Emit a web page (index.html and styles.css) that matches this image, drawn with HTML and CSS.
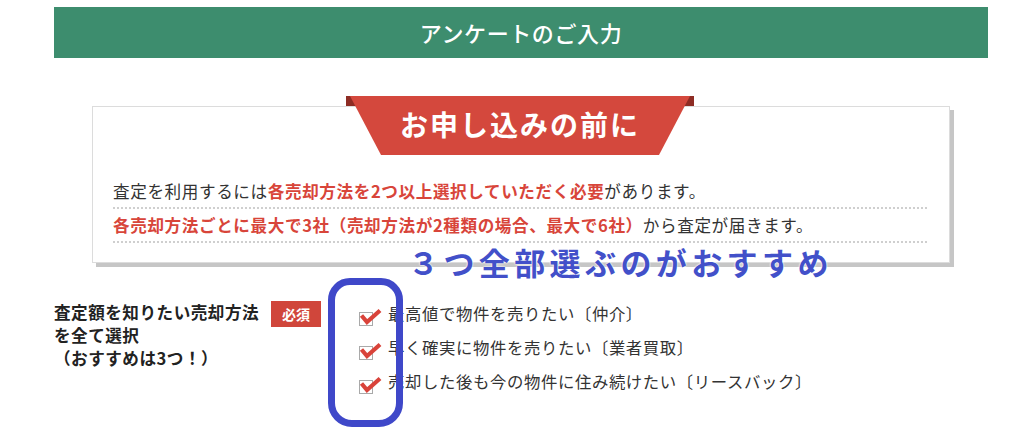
FILE: index.html
```html
<!DOCTYPE html>
<html lang="ja">
<head>
<meta charset="utf-8">
<title>アンケートのご入力</title>
<link rel="stylesheet" href="styles.css">
</head>
<body>
<div class="page">
  <h1 class="head">アンケートのご入力</h1>

  <section class="notice">
    <div class="ribbon">
      <svg class="ribbon-bg" width="348" height="60" viewBox="0 0 348 60" aria-hidden="true">
        <polygon points="0,0 6,0 11,10 0,10" fill="#8e2c24"/>
        <polygon points="342,0 348,0 348,10 337,10" fill="#8e2c24"/>
        <polygon points="4,0 344,0 313,59 35,59" fill="#d4483d"/>
      </svg>
      <span class="ribbon-text">お申し込みの前に</span>
    </div>
    <p class="notice-row">査定を利用するには<strong>各売却方法を2つ以上選択していただく必要</strong>があります。</p>
    <p class="notice-row"><strong>各売却方法ごとに最大で3社（売却方法が2種類の場合、最大で6社）</strong>から査定が届きます。</p>
  </section>

  <section class="form-row">
    <div class="label">査定額を知りたい売却方法<br>を全て選択<br>（おすすめは3つ！）</div>
    <span class="badge">必須</span>
    <ul class="options">
      <li class="opt"><span class="cb"><svg class="tick" width="24" height="18" viewBox="0 0 24 18" aria-hidden="true"><path d="M2.5 7.5 L8 14 L21 2.5" fill="none" stroke="#d9433a" stroke-width="4.2" stroke-linejoin="miter"/></svg></span><span class="opt-text">最高値で物件を売りたい〔仲介〕</span></li>
      <li class="opt"><span class="cb"><svg class="tick" width="24" height="18" viewBox="0 0 24 18" aria-hidden="true"><path d="M2.5 7.5 L8 14 L21 2.5" fill="none" stroke="#d9433a" stroke-width="4.2" stroke-linejoin="miter"/></svg></span><span class="opt-text">早く確実に物件を売りたい〔業者買取〕</span></li>
      <li class="opt"><span class="cb"><svg class="tick" width="24" height="18" viewBox="0 0 24 18" aria-hidden="true"><path d="M2.5 7.5 L8 14 L21 2.5" fill="none" stroke="#d9433a" stroke-width="4.2" stroke-linejoin="miter"/></svg></span><span class="opt-text">売却した後も今の物件に住み続けたい〔リースバック〕</span></li>
    </ul>
  </section>

  <div class="memo">３つ全部選ぶのがおすすめ</div>
  <div class="memo-ring"></div>
</div>
</body>
</html>
```

FILE: styles.css
```css
html, body {
  margin: 0;
  padding: 0;
  background: #fff;
}

body {
  font-family: "Noto Sans CJK JP", "Noto Sans", sans-serif;
  color: #333;
}

.page {
  position: relative;
  width: 934px;
  padding: 7px 36px 0 54px;
}

.head {
  margin: 0;
  height: 51px;
  line-height: 50px;
  background: #3d8d6e;
  color: #fff;
  text-align: center;
  font-size: 22px;
  font-weight: 500;
  letter-spacing: 0.6px;
}

.notice {
  margin: 48px 38px 0 38px;
  border: 1px solid #dcdcdc;
  box-shadow: 4px 4px 0 #c6c6c6;
  padding: 0 22px 19px 20px;
  background: #fff;
}

.ribbon {
  position: relative;
  width: 348px;
  height: 59px;
  margin: -11px auto 20px;
  display: flex;
  justify-content: center;
  align-items: center;
}

.ribbon-bg {
  position: absolute;
  left: 0;
  top: 0;
}

.ribbon-text {
  position: relative;
  color: #fff;
  font-size: 28px;
  font-weight: 700;
  letter-spacing: 2px;
  line-height: 1;
  margin-top: -4px;
}

.notice-row {
  margin: 0;
  line-height: 32px;
  font-size: 16.6px;
  letter-spacing: 0.6px;
  border-bottom: 2px dotted #cfcfcf;
  white-space: nowrap;
}

.notice-row strong {
  color: #d8453a;
  font-weight: 700;
}

.form-row {
  display: flex;
  align-items: flex-start;
  margin-top: 33px;
  padding-bottom: 59px;
  border-bottom: 1px solid #dedede;
}

.label {
  width: 205px;
  padding-top: 5px;
  font-size: 16.6px;
  font-weight: 700;
  line-height: 23px;
  letter-spacing: 0.5px;
  color: #222;
  white-space: nowrap;
}

.badge {
  margin: 5px 0 0 12px;
  width: 50px;
  height: 26px;
  line-height: 26px;
  background: #d0463b;
  color: #fff;
  font-size: 14px;
  font-weight: 700;
  text-align: center;
}

.options {
  list-style: none;
  margin: 0 0 0 38px;
  padding: 0;
}

.opt {
  display: flex;
  align-items: flex-start;
  height: 34px;
}

.cb {
  position: relative;
  flex: none;
  width: 12px;
  height: 12px;
  margin-top: 16px;
  border: 1px solid #a9a9a9;
  background: #fff;
}

.tick {
  position: absolute;
  left: -1px;
  top: -5px;
}

.opt-text {
  margin-left: 15px;
  line-height: 34px;
  font-size: 16.4px;
  letter-spacing: 0.6px;
  color: #333;
  white-space: nowrap;
}

.memo {
  position: absolute;
  left: 408px;
  top: 244px;
  font-size: 31px;
  line-height: 36px;
  font-weight: 700;
  letter-spacing: 4.4px;
  color: #4250c9;
  white-space: nowrap;
  text-shadow: 0 0 2px #fff, 0 0 2px #fff;
}

.memo-ring {
  position: absolute;
  left: 328px;
  top: 278px;
  width: 61px;
  height: 135px;
  border: 7px solid #3f48c9;
  border-radius: 22px 22px 24px 24px;
}
```
